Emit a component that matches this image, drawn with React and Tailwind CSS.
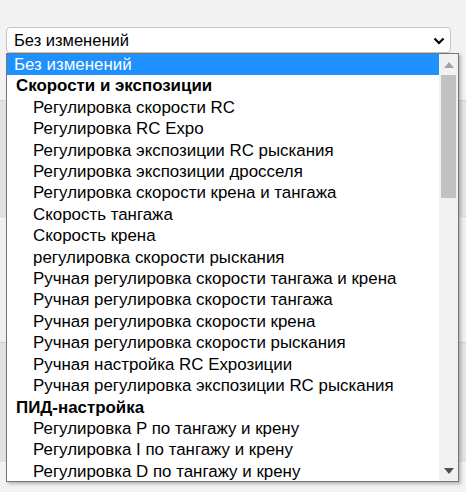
const groups = [
  {
    label: 'Скорости и экспозиции',
    options: [
      'Регулировка скорости RC',
      'Регулировка RC Expo',
      'Регулировка экспозиции RC рыскания',
      'Регулировка экспозиции дросселя',
      'Регулировка скорости крена и тангажа',
      'Скорость тангажа',
      'Скорость крена',
      'регулировка скорости рыскания',
      'Ручная регулировка скорости тангажа и крена',
      'Ручная регулировка скорости тангажа',
      'Ручная регулировка скорости крена',
      'Ручная регулировка скорости рыскания',
      'Ручная настройка RC Exрозиции',
      'Ручная регулировка экспозиции RC рыскания',
    ],
  },
  {
    label: 'ПИД-настройка',
    options: [
      'Регулировка P по тангажу и крену',
      'Регулировка I по тангажу и крену',
      'Регулировка D по тангажу и крену',
    ],
  },
]

function Scrollbar() {
  return (
    <div className="flex w-[19px] shrink-0 flex-col bg-[#f1f1f1]">
      <div className="flex h-[21px] items-center justify-center">
        <svg width="10" height="6" viewBox="0 0 10 6">
          <path d="M5 0 L10 6 L0 6 Z" fill="#a3a3a3" />
        </svg>
      </div>
      <div className="mx-[2px] h-[123px] bg-[#c1c1c1]" />
      <div className="flex-1" />
      <div className="flex h-[21px] items-center justify-center">
        <svg width="10" height="6" viewBox="0 0 10 6">
          <path d="M0 0 L10 0 L5 6 Z" fill="#505050" />
        </svg>
      </div>
    </div>
  )
}

export default function App() {
  return (
    <div className="relative h-[492px] w-[466px] overflow-hidden bg-[#f2f2f2] font-['Liberation_Sans',Arial,sans-serif] text-black">
      {/* page behind the open select */}
      <div className="flex flex-col">
        <div className="h-[27px]" />
        <div className="mx-[6px] flex h-[26px] w-[445px] items-center justify-between rounded-[4px] border border-[#c4c4c4] bg-white pl-[7px] pr-[5px] text-[16.5px]">
          <span>Без изменений</span>
          <svg width="12" height="8" viewBox="0 0 12 8" className="mt-[1px]">
            <path d="M1.5 1.5 L6 6 L10.5 1.5" fill="none" stroke="#000" strokeWidth="2.2" />
          </svg>
        </div>
        <div className="h-[47px]" />
        <div className="h-[118px] border-t border-[#d0d0d0] bg-[#e2e2e2]" />
        <div className="h-[124px] border-t border-[#f8f8f8] bg-[#efefef]" />
        <div className="h-[120px] border-t border-[#d0d0d0] bg-[#e2e2e2]" />
        <div className="flex-1 border-t border-[#f8f8f8] bg-[#efefef]" />
      </div>

      {/* open option list */}
      <div className="absolute left-[6px] top-[53px] flex h-[429px] w-[453px] border border-[#767676] bg-white text-[16.9px] shadow-[2px_2px_3px_rgba(0,0,0,0.25)]">
        <div className="flex-1 overflow-hidden leading-[21.4px]">
          <div className="bg-[#1e90ff] pl-[7px] text-white">Без изменений</div>
          {groups.map((group) => (
            <div key={group.label}>
              <div className="pl-[9px] font-bold">{group.label}</div>
              {group.options.map((option) => (
                <div key={option} className="whitespace-nowrap pl-[26px]">
                  {option}
                </div>
              ))}
            </div>
          ))}
        </div>
        <Scrollbar />
      </div>
    </div>
  )
}
